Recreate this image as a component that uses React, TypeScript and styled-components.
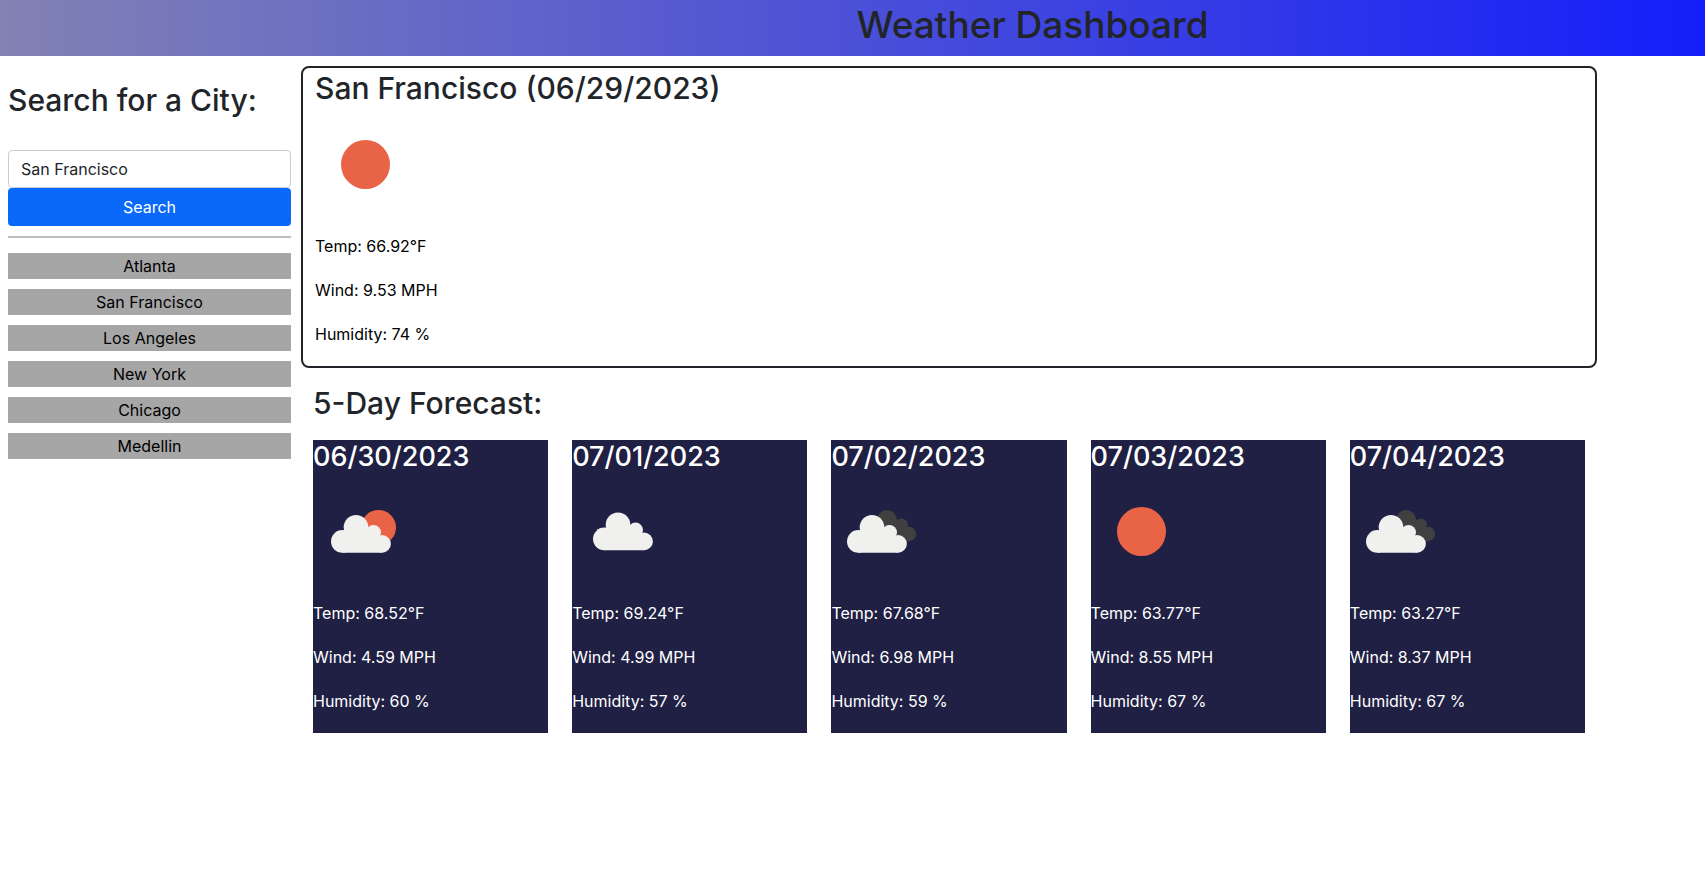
import React, { useState } from "react";
import styled, { createGlobalStyle } from "styled-components";

type Sky = "sun" | "partly" | "cloud" | "broken";

interface Reading {
  date: string;
  sky: Sky;
  temp: string;
  wind: string;
  humidity: string;
}

const current: Reading = { date: "06/29/2023", sky: "sun", temp: "66.92", wind: "9.53", humidity: "74" };

const forecast: Reading[] = [
  { date: "06/30/2023", sky: "partly", temp: "68.52", wind: "4.59", humidity: "60" },
  { date: "07/01/2023", sky: "cloud", temp: "69.24", wind: "4.99", humidity: "57" },
  { date: "07/02/2023", sky: "broken", temp: "67.68", wind: "6.98", humidity: "59" },
  { date: "07/03/2023", sky: "sun", temp: "63.77", wind: "8.55", humidity: "67" },
  { date: "07/04/2023", sky: "broken", temp: "63.27", wind: "8.37", humidity: "67" },
];

const cities = ["Atlanta", "San Francisco", "Los Angeles", "New York", "Chicago", "Medellin"];

const GlobalStyle = createGlobalStyle`
  *, *::before, *::after { box-sizing: border-box; }
  body {
    margin: 0;
    background: #fff;
    color: #212529;
    font-family: Inter, "Liberation Sans", sans-serif;
    font-size: 16px;
    line-height: 24px;
  }
`;

const Header = styled.header`
  padding: 0 0 6px 360px;
  background: linear-gradient(90deg, #8282b4, #141efa);
  text-align: center;
`;

const PageTitle = styled.h1`
  margin: 0;
  font-size: 37px;
  font-weight: 500;
  line-height: 50px;
`;

const Columns = styled.div`
  display: grid;
  grid-template-columns: 283fr 1296fr;
  column-gap: 10px;
  padding: 10px 108px 0 8px;
`;

const Sidebar = styled.aside`
  padding-top: 14px;
`;

const Heading = styled.h2`
  margin: 0;
  padding-top: 2px;
  font-size: 30px;
  font-weight: 500;
  line-height: 37px;
`;

const SearchForm = styled.form`
  display: flex;
  flex-direction: column;
  margin-top: 31px;
`;

const CityInput = styled.input`
  width: 100%;
  height: 38px;
  padding: 6px 12px;
  border: 1px solid #c8ced6;
  border-radius: 4px;
  background: #fff;
  color: #212529;
  font: inherit;
`;

const SearchButton = styled.button`
  height: 38px;
  border: 0;
  border-radius: 4px;
  background: #0b69fa;
  color: #fff;
  font: inherit;
  cursor: pointer;
`;

const Divider = styled.hr`
  height: 2px;
  margin: 10px 0 15px;
  border: 0;
  background: #bfbfbf;
`;

const History = styled.div`
  display: flex;
  flex-direction: column;
  gap: 10px;
`;

const HistoryButton = styled.button`
  height: 26px;
  padding: 0;
  border: 0;
  background: #a6a6a6;
  color: #000;
  font: inherit;
  cursor: pointer;
`;

const CurrentPanel = styled.section`
  padding: 0 12px;
  border: 2px solid #212529;
  border-radius: 8px;
  color: #000;

  ${Heading} { color: #212529; }
`;

const Forecast = styled.section`
  padding: 15px 12px 0;
`;

const Cards = styled.div`
  display: grid;
  grid-template-columns: repeat(5, minmax(0, 1fr));
  gap: 24px;
  margin-top: 18px;
`;

const Card = styled.article`
  background: #1f2043;
  color: #fff;
`;

const CardDate = styled.h3`
  margin: 0;
  font-size: 27px;
  font-weight: 500;
  line-height: 34px;
`;

const Picture = styled.svg`
  display: block;
  width: 100px;
  height: 100px;
  margin: 8px 0 19px;
`;

const Line = styled.p`
  margin: 0 0 20px;
`;

function Cloud({ x = 0, y = 0 }: { x?: number; y?: number }) {
  return (
    <g transform={`translate(${x} ${y})`} fill="#f0f0ee">
      <circle cx="29.3" cy="59.4" r="11.3" />
      <circle cx="43" cy="45.3" r="12.3" />
      <circle cx="60.5" cy="50.6" r="7.5" />
      <circle cx="69.1" cy="61.9" r="8.8" />
      <path d="M29.3 70.7 L31 48.2 L43 45 L60 48 L69.1 58 V70.7 Z" />
    </g>
  );
}

function DarkCloud() {
  return (
    <g fill="#404041">
      <circle cx="56" cy="38" r="10" />
      <circle cx="70.5" cy="43" r="6.5" />
      <circle cx="78" cy="52" r="7.2" />
      <path d="M56 38 L70 41 L76 49 L78 59.2 L58 59.2 Z" />
    </g>
  );
}

function WeatherIcon({ sky }: { sky: Sky }) {
  return (
    <Picture viewBox="0 0 100 100" aria-hidden="true">
      {sky === "sun" && <circle cx="50.5" cy="49.5" r="24.5" fill="#e96347" />}
      {sky === "partly" && (
        <>
          <circle cx="65.5" cy="45.5" r="17.5" fill="#e96347" />
          <Cloud />
        </>
      )}
      {sky === "cloud" && <Cloud x={3} y={-2.5} />}
      {sky === "broken" && (
        <>
          <DarkCloud />
          <Cloud x={-2} />
        </>
      )}
    </Picture>
  );
}

function Readings({ reading }: { reading: Reading }) {
  return (
    <>
      <WeatherIcon sky={reading.sky} />
      <Line>Temp: {reading.temp}°F</Line>
      <Line>Wind: {reading.wind} MPH</Line>
      <Line>Humidity: {reading.humidity} %</Line>
    </>
  );
}

export default function App() {
  const [city, setCity] = useState("San Francisco");

  return (
    <>
      <GlobalStyle />
      <Header>
        <PageTitle>Weather Dashboard</PageTitle>
      </Header>
      <Columns>
        <Sidebar>
          <Heading>
            <label htmlFor="city">Search for a City:</label>
          </Heading>
          <SearchForm onSubmit={(e) => e.preventDefault()}>
            <CityInput id="city" type="text" value={city} onChange={(e) => setCity(e.target.value)} />
            <SearchButton type="submit">Search</SearchButton>
          </SearchForm>
          <Divider />
          <History>
            {cities.map((name) => (
              <HistoryButton key={name} type="button" onClick={() => setCity(name)}>
                {name}
              </HistoryButton>
            ))}
          </History>
        </Sidebar>
        <main>
          <CurrentPanel>
            <Heading>San Francisco ({current.date})</Heading>
            <Readings reading={current} />
          </CurrentPanel>
          <Forecast>
            <Heading>5-Day Forecast:</Heading>
            <Cards>
              {forecast.map((day) => (
                <Card key={day.date}>
                  <CardDate>{day.date}</CardDate>
                  <Readings reading={day} />
                </Card>
              ))}
            </Cards>
          </Forecast>
        </main>
      </Columns>
    </>
  );
}
